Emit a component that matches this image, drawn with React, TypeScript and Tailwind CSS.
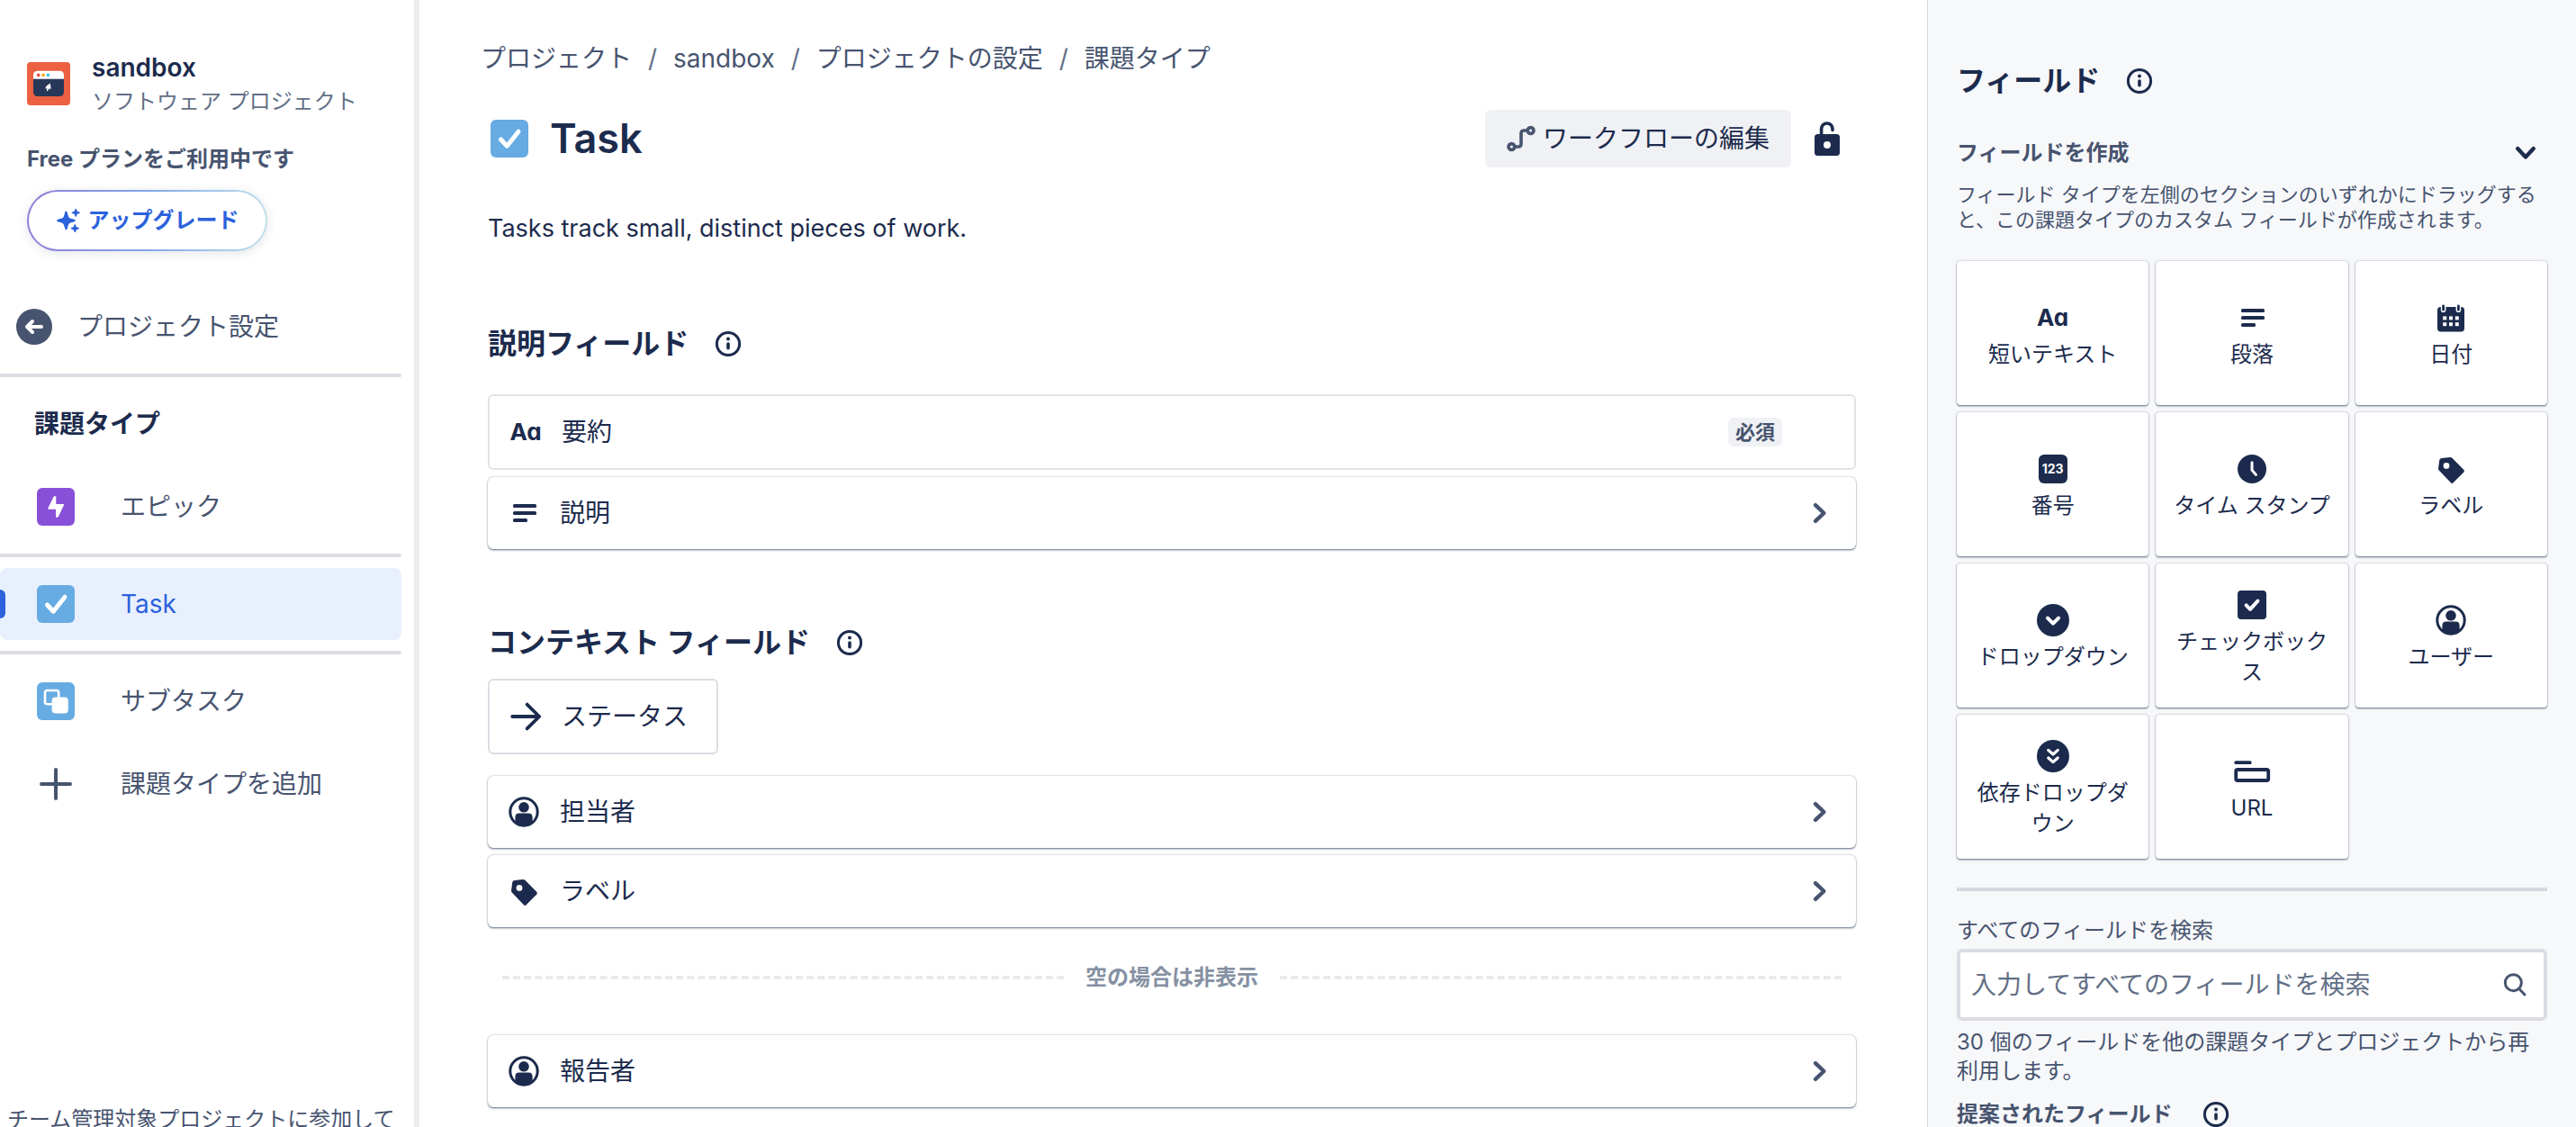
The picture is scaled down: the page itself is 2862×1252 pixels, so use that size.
import type { ReactNode } from "react";

type IconProps = { className?: string };

function Svg({ className = "size-12", children }: { className?: string; children: ReactNode }) {
  return (
    <svg viewBox="0 0 24 24" fill="none" aria-hidden="true" className={`${className} shrink-0`}>
      {children}
    </svg>
  );
}

const round = { strokeLinecap: "round", strokeLinejoin: "round" } as const;

function InfoIcon() {
  return (
    <Svg>
      <circle cx="12" cy="12" r="6.3" stroke="currentColor" strokeWidth="1.5" />
      <circle cx="12" cy="9.3" r="1" fill="currentColor" />
      <rect x="11.1" y="11.1" width="1.8" height="4.2" rx="0.9" fill="currentColor" />
    </Svg>
  );
}

function InfoButton({ label }: { label: string }) {
  return (
    <button type="button" aria-label={label} className="-my-2 flex text-[#1c2b4d]">
      <InfoIcon />
    </button>
  );
}

function TextIcon() {
  return (
    <span
      aria-hidden="true"
      className="flex size-12 shrink-0 items-center justify-center text-[26px] leading-8 font-bold [font-feature-settings:'cv11']"
    >
      Aa
    </span>
  );
}

function ParagraphIcon() {
  return (
    <Svg>
      <g fill="currentColor">
        <rect x="6" y="7" width="13" height="2" rx="0.8" />
        <rect x="6" y="11" width="13" height="2" rx="0.8" />
        <rect x="6" y="15" width="8" height="2" rx="0.8" />
      </g>
    </Svg>
  );
}

function CalendarIcon() {
  return (
    <Svg>
      <rect x="4.5" y="6" width="15" height="13.7" rx="1.8" fill="currentColor" />
      <g stroke="#fff" strokeWidth="2.8" {...round}>
        <path d="M7.8 5.4V7.6M16.2 5.4V7.6" />
      </g>
      <g stroke="currentColor" strokeWidth="1.4" {...round}>
        <path d="M7.8 5.4V7.6M16.2 5.4V7.6" />
      </g>
      <g fill="#fff">
        <rect x="7.6" y="11.2" width="2" height="2" />
        <rect x="11" y="11.2" width="2" height="2" />
        <rect x="14.4" y="11.2" width="2" height="2" />
        <rect x="7.6" y="14.6" width="2" height="2" />
        <rect x="11" y="14.6" width="2" height="2" />
        <rect x="14.4" y="14.6" width="2" height="2" />
      </g>
    </Svg>
  );
}

function NumberIcon() {
  return (
    <span className="flex size-12 items-center justify-center" aria-hidden="true">
      <span className="flex size-8 items-center justify-center rounded-md bg-[#1c2b4d] text-[14px] leading-none font-bold text-white">
        123
      </span>
    </span>
  );
}

function ClockIcon() {
  return (
    <Svg>
      <circle cx="12" cy="12" r="8" fill="currentColor" />
      <path d="M12 8.4V12.6L14.2 15.2" stroke="#fff" strokeWidth="1.5" {...round} />
    </Svg>
  );
}

function TagIcon() {
  return (
    <Svg>
      <path
        fillRule="evenodd"
        fill="currentColor"
        d="M6.9 6L11.4 5.5Q12.2 5.4 12.8 6L19.1 12.4Q19.7 13 19.2 13.7L13.2 19.8Q12.6 20.3 12.1 19.7L5.5 12.9Q5 12.4 5 11.7L5.6 7.2Q5.7 6.2 6.9 6ZM9.5 8.5A1.7 1.7 0 1 0 9.5 11.9A1.7 1.7 0 1 0 9.5 8.5Z"
      />
    </Svg>
  );
}

function DropdownIcon() {
  return (
    <Svg>
      <circle cx="12" cy="12" r="9" fill="currentColor" />
      <path d="M9 10.8L12 13.8L15 10.8" stroke="#fff" strokeWidth="2" {...round} />
    </Svg>
  );
}

function DependentDropdownIcon() {
  return (
    <Svg>
      <circle cx="12" cy="12" r="9" fill="currentColor" />
      <path d="M9.4 8.7L12 11L14.6 8.7M9.4 13L12 15.3L14.6 13" stroke="#fff" strokeWidth="1.6" {...round} />
    </Svg>
  );
}

function CheckboxIcon() {
  return (
    <Svg>
      <rect x="4" y="4" width="16" height="16" rx="2" fill="currentColor" />
      <path d="M8.8 12.2L11 14.4L15.2 9.8" stroke="#fff" strokeWidth="2" {...round} />
    </Svg>
  );
}

function PersonIcon() {
  return (
    <Svg>
      <circle cx="12" cy="12" r="7.6" stroke="currentColor" strokeWidth="1.5" />
      <circle cx="12" cy="9.4" r="2.9" fill="currentColor" />
      <path d="M7.2 15Q7.2 12.8 9.4 12.8H14.6Q16.8 12.8 16.8 15V17.5Q14.8 19.6 12 19.6T7.2 17.5Z" fill="currentColor" />
    </Svg>
  );
}

function UrlIcon() {
  return (
    <Svg>
      <rect x="2.2" y="6.1" width="9.6" height="1.9" rx="0.8" fill="currentColor" />
      <rect x="3.1" y="11" width="18" height="6" rx="0.9" stroke="currentColor" strokeWidth="1.9" />
    </Svg>
  );
}

function ArrowIcon() {
  return (
    <Svg>
      <path d="M4.6 12H19.4M12.8 5.3L19.6 12L12.8 18.7" stroke="currentColor" strokeWidth="1.9" {...round} />
    </Svg>
  );
}

function ChevronIcon({ className }: IconProps) {
  return (
    <Svg className={className}>
      <path d="M9.5 7.6L14.2 12L9.5 16.4" stroke="currentColor" strokeWidth="2.2" {...round} />
    </Svg>
  );
}

function TypeIcon({ color, children }: { color: string; children: ReactNode }) {
  return (
    <svg viewBox="0 0 42 42" fill="none" aria-hidden="true" className="size-[42px] shrink-0">
      <rect width="42" height="42" rx="6" fill={color} />
      {children}
    </svg>
  );
}

function TaskIcon() {
  return (
    <TypeIcon color="#67abe3">
      <path d="M11.5 22L18.3 29.2L31 13.2" stroke="#fff" strokeWidth="5" {...round} />
    </TypeIcon>
  );
}

function EpicIcon() {
  return (
    <TypeIcon color="#8850d8">
      <path
        d="M20.5 10V18.7H29.3L23 32H21.8V23H13L19.3 10Z"
        fill="#fff"
        stroke="#fff"
        strokeWidth="1.6"
        strokeLinejoin="round"
      />
    </TypeIcon>
  );
}

function SubtaskIcon() {
  return (
    <TypeIcon color="#67abe3">
      <rect x="9" y="9" width="15.2" height="15.2" rx="2.5" stroke="#fff" strokeWidth="2.6" />
      <rect x="16.6" y="16.4" width="18.2" height="18.2" rx="4" fill="#fff" />
    </TypeIcon>
  );
}

function ProjectLogo() {
  return (
    <svg viewBox="0 0 48 48" aria-hidden="true" className="size-12 shrink-0">
      <rect width="48" height="48" rx="4" fill="#ec6142" />
      <path d="M12 9.7H36Q41 9.7 41 14.7V19H7V14.7Q7 9.7 12 9.7Z" fill="#fff" />
      <path d="M7 18.7H41V33Q41 38 36 38H12Q7 38 7 33Z" fill="#283858" />
      <circle cx="12.7" cy="14.4" r="1.8" fill="#e5493a" />
      <circle cx="18" cy="14.4" r="1.8" fill="#f5a623" />
      <circle cx="23.4" cy="14.4" r="1.8" fill="#3bbfe0" />
      <path d="M25.8 23.6L26.6 29.2L25.4 30.4L25 28.8L22.6 32.4L21.8 31.6L22.6 29.4L20.2 29.2L21.6 26.6Z" fill="#fff" />
    </svg>
  );
}

function SparkleIcon() {
  return (
    <svg viewBox="0 0 28 28" fill="currentColor" aria-hidden="true" className="size-7 shrink-0">
      <path d="M11.5 3.6C12.3 3.6 12.7 4.4 13.4 7.4C14.2 10.5 15 11.3 18 12C21 12.8 21.8 13.1 21.8 14C21.8 14.9 21 15.2 18 16C15 16.7 14.2 17.5 13.4 20.6C12.7 23.6 12.3 24.4 11.5 24.4C10.7 24.4 10.2 23.6 9.5 20.6C8.7 17.5 7.9 16.7 4.9 16C1.9 15.2 1.1 14.9 1.1 14C1.1 13.1 1.9 12.8 4.9 12C7.9 11.3 8.7 10.5 9.5 7.4C10.2 4.4 10.7 3.6 11.5 3.6Z" />
      <g stroke="currentColor" strokeLinejoin="round">
        <path d="M22.2 1L23.5 4L26.6 5.3L23.5 6.6L22.2 9.6L20.9 6.6L17.8 5.3L20.9 4Z" />
        <path d="M21.3 18.4L22.6 21.4L25.7 22.7L22.6 24L21.3 27L20 24L16.9 22.7L20 21.4Z" />
      </g>
    </svg>
  );
}

function WorkflowIcon() {
  return (
    <svg viewBox="0 0 32 32" fill="none" stroke="currentColor" aria-hidden="true" className="size-8 shrink-0">
      <circle cx="5.4" cy="25" r="3.4" strokeWidth="3.6" />
      <circle cx="26.6" cy="7" r="3.4" strokeWidth="3.6" />
      <path d="M9 25H13Q16 25 16 22V10Q16 7 19 7H23" strokeWidth="3.6" />
    </svg>
  );
}

function UnlockIcon() {
  return (
    <svg viewBox="0 0 28 40" fill="none" aria-hidden="true" className="h-10 w-7 shrink-0">
      <path
        fillRule="evenodd"
        fill="currentColor"
        d="M3.5 15H24.5Q28 15 28 18.5V35.5Q28 39 24.5 39H3.5Q0 39 0 35.5V18.5Q0 15 3.5 15ZM14 23A4 4 0 1 0 14 31A4 4 0 1 0 14 23Z"
      />
      <path d="M7.6 17V9.2A6.2 6.2 0 0 1 20 9.2V10.4" stroke="currentColor" strokeWidth="3.6" strokeLinecap="round" />
    </svg>
  );
}

function SidebarRule() {
  return <hr className="mr-3.5 h-1 rounded-r-sm border-0 bg-[#dddee4]" />;
}

function SidebarItem({ icon, label, active = false }: { icon: ReactNode; label: string; active?: boolean }) {
  return (
    <a
      href="#"
      aria-current={active ? "page" : undefined}
      className={`relative my-3 mr-3.5 flex h-20 items-center gap-[51px] rounded-lg pl-[41px] text-[28px] leading-10 ${
        active ? "bg-[#e9f0fd] text-[#2c62dc]" : "text-[#47546f]"
      }`}
    >
      {active && <span className="absolute left-0 h-8 w-1.5 rounded-r-md bg-[#2c62dc]" />}
      {icon}
      {label}
    </a>
  );
}

function Sidebar() {
  return (
    <aside className="flex w-[466px] shrink-0 flex-col overflow-hidden border-r-6 border-[#ededf0] text-[#47546f]">
      <div className="flex items-center gap-6 pt-[55px] pl-[30px]">
        <ProjectLogo />
        <div>
          <p className="text-[28px] leading-10 font-semibold text-[#1c2b4d]">sandbox</p>
          <p className="text-[24px] leading-9 text-[#626f86]">ソフトウェア プロジェクト</p>
        </div>
      </div>
      <p className="mt-[30px] pl-[30px] text-[24px] leading-8 font-bold">Free プランをご利用中です</p>
      <button
        type="button"
        className="mt-[18px] ml-[30px] flex h-[68px] w-[267px] rounded-full bg-linear-to-r from-[#8f7ed8] via-[#82a8e8] to-[#bfdfe9] p-0.5 shadow-[0_2px_12px_rgba(9,30,66,0.12)]"
      >
        <span className="flex h-full w-full items-center justify-center gap-2 rounded-full bg-white text-[24px] leading-8 font-bold text-[#2c62dc]">
          <SparkleIcon />
          アップグレード
        </span>
      </button>
      <a href="#" className="mt-11 mb-3 flex h-20 items-center gap-7 pl-[18px] text-[28px] leading-10">
        <svg viewBox="0 0 40 40" fill="none" aria-hidden="true" className="size-10 shrink-0">
          <circle cx="20" cy="20" r="20" fill="currentColor" />
          <path d="M28 20H12M18 14L12 20L18 26" stroke="#fff" strokeWidth="4" {...round} />
        </svg>
        プロジェクト設定
      </a>
      <SidebarRule />
      <h2 className="mt-8 mb-5 pl-[38px] text-[28px] leading-10 font-bold text-[#1c2b4d]">課題タイプ</h2>
      <nav className="flex flex-col">
        <SidebarItem icon={<EpicIcon />} label="エピック" />
        <SidebarRule />
        <SidebarItem icon={<TaskIcon />} label="Task" active />
        <SidebarRule />
        <SidebarItem icon={<SubtaskIcon />} label="サブタスク" />
        <button
          type="button"
          className="mr-3.5 flex h-20 items-center gap-[51px] pl-[41px] text-[28px] leading-10"
        >
          <svg viewBox="0 0 42 42" aria-hidden="true" className="size-[42px] shrink-0">
            <path d="M21 5V37M5 21H37" stroke="currentColor" strokeWidth="4" {...round} />
          </svg>
          課題タイプを追加
        </button>
      </nav>
      <p className="mt-auto h-6 overflow-hidden pl-2 text-[24px] leading-8 whitespace-nowrap">
        チーム管理対象プロジェクトに参加して
      </p>
    </aside>
  );
}

const cardShadow = "shadow-[0_1px_1px_rgba(9,30,66,0.3),0_2px_2px_rgba(9,30,66,0.2),0_0_2px_rgba(9,30,66,0.45)]";

function FieldCard({ icon, label }: { icon: ReactNode; label: string }) {
  return (
    <button
      type="button"
      className={`flex h-20 w-full items-center rounded-md bg-white pr-4 pl-4 text-left text-[28px] leading-10 ${cardShadow}`}
    >
      {icon}
      <span className="flex-1 pl-4">{label}</span>
      <ChevronIcon className="size-12 text-[#47546f]" />
    </button>
  );
}

function SectionHeading({ title }: { title: string }) {
  return (
    <div className="flex h-12 items-center gap-5">
      <h2 className="text-[32px] leading-[48px] font-bold">{title}</h2>
      <InfoButton label={`${title}について`} />
    </div>
  );
}

function Dashes() {
  return <span aria-hidden="true" className="flex-1 border-t-4 border-dashed border-[#e9eaee]" />;
}

const crumbs = ["プロジェクト", "sandbox", "プロジェクトの設定", "課題タイプ"];

function Main() {
  return (
    <main className="min-w-0 flex-1 overflow-hidden pt-[45px] pr-[79px] pl-[76px]">
      <nav aria-label="パンくずリスト" className="-ml-2">
        <ol className="flex text-[28px] leading-10 text-[#47546f]">
          {crumbs.map((crumb, i) => (
            <li key={crumb} className="flex">
              {i > 0 && <span className="w-[46px] text-center text-[#626f86]">/</span>}
              <a href="#">{crumb}</a>
            </li>
          ))}
        </ol>
      </nav>

      <div className="mt-[37px] flex h-16 items-center">
        <span className="pl-[3px]">
          <TaskIcon />
        </span>
        <h1 className="flex-1 pl-6 text-[45px] leading-[56px] font-semibold">Task</h1>
        <button
          type="button"
          className="flex h-16 items-center gap-2 rounded-md bg-[#f0f1f4] px-6 text-[28px] leading-10"
        >
          <span className="text-[#47546f]">
            <WorkflowIcon />
          </span>
          ワークフローの編集
        </button>
        <button type="button" aria-label="ロック解除" className="mr-[18px] ml-[26px] flex">
          <UnlockIcon />
        </button>
      </div>

      <p className="mt-12 text-[27px] leading-10">Tasks track small, distinct pieces of work.</p>

      <section className="mt-21">
        <SectionHeading title="説明フィールド" />
        <div className="mt-8 flex flex-col gap-2">
          <div className="flex h-21 items-center rounded-md border-2 border-[#e2e3e8] pr-20 pl-4 text-[28px] leading-10">
            <TextIcon />
            <span className="flex-1 pl-4">要約</span>
            <span className="rounded-md bg-[#f0f1f4] px-2 text-[22px] leading-8 font-bold text-[#47546f]">必須</span>
          </div>
          <FieldCard icon={<ParagraphIcon />} label="説明" />
        </div>
      </section>

      <section className="mt-20">
        <SectionHeading title="コンテキスト フィールド" />
        <div className="mt-4 flex">
          <div className="flex h-21 items-center rounded-md border-2 border-[#dddee4] pr-8 pl-4 text-[28px] leading-10">
            <ArrowIcon />
            <span className="pl-4">ステータス</span>
          </div>
        </div>
        <div className="mt-6 flex flex-col gap-2">
          <FieldCard icon={<PersonIcon />} label="担当者" />
          <FieldCard icon={<TagIcon />} label="ラベル" />
        </div>
        <div className="mt-10 flex items-center gap-6 px-4">
          <Dashes />
          <span className="text-[24px] leading-8 font-bold text-[#8590a2]">空の場合は非表示</span>
          <Dashes />
        </div>
        <div className="mt-12 pb-6">
          <FieldCard icon={<PersonIcon />} label="報告者" />
        </div>
      </section>
    </main>
  );
}

const fieldTypes: { label: string; icon: ReactNode }[] = [
  { label: "短いテキスト", icon: <TextIcon /> },
  { label: "段落", icon: <ParagraphIcon /> },
  { label: "日付", icon: <CalendarIcon /> },
  { label: "番号", icon: <NumberIcon /> },
  { label: "タイム スタンプ", icon: <ClockIcon /> },
  { label: "ラベル", icon: <TagIcon /> },
  { label: "ドロップダウン", icon: <DropdownIcon /> },
  { label: "チェックボックス", icon: <CheckboxIcon /> },
  { label: "ユーザー", icon: <PersonIcon /> },
  { label: "依存ドロップダウン", icon: <DependentDropdownIcon /> },
  { label: "URL", icon: <UrlIcon /> },
];

function FieldPanel() {
  return (
    <aside className="w-[721px] shrink-0 overflow-hidden border-l border-[#d3d8e0] bg-[#f7f8fa] px-8 pt-[66px] text-[#47546f]">
      <div className="flex h-12 items-center gap-5 text-[#1c2b4d]">
        <h2 className="text-[32px] leading-[48px] font-bold">フィールド</h2>
        <InfoButton label="フィールドについて" />
      </div>

      <div className="mt-10 flex h-8 items-center justify-between">
        <h3 className="text-[24px] leading-8 font-bold">フィールドを作成</h3>
        <button type="button" aria-label="折りたたむ" className="flex text-[#1c2b4d]">
          <ChevronIcon className="size-12 rotate-90" />
        </button>
      </div>
      <p className="mt-4 text-[22px] leading-7">
        フィールド タイプを左側のセクションのいずれかにドラッグすると、この課題タイプのカスタム フィールドが作成されます。
      </p>

      <div className="mt-8 grid grid-cols-3 gap-2 text-[#1c2b4d]">
        {fieldTypes.map(({ label, icon }) => (
          <button
            key={label}
            type="button"
            className={`flex h-40 flex-col items-center justify-center rounded-sm bg-white px-4 ${cardShadow}`}
          >
            {icon}
            <span className="text-center text-[24px] leading-[34px]">{label}</span>
          </button>
        ))}
      </div>

      <hr className="mt-8 h-1 border-0 bg-[#d6d7df]" />

      <label htmlFor="field-search" className="mt-7 block text-[24px] leading-8">
        すべてのフィールドを検索
      </label>
      <div className="mt-1 flex h-20 items-center rounded-md border-4 border-[#dcdde4] bg-white pr-3 pl-3">
        <input
          id="field-search"
          type="text"
          placeholder="入力してすべてのフィールドを検索"
          className="min-w-0 flex-1 bg-transparent text-[28px] leading-10 outline-none placeholder:text-[#626f86]"
        />
        <Svg className="size-10">
          <circle cx="11" cy="10.6" r="5.4" stroke="currentColor" strokeWidth="1.8" />
          <path d="M15 14.8L18.6 18.6" stroke="currentColor" strokeWidth="1.8" {...round} />
        </Svg>
      </div>
      <p className="mt-2 text-[24px] leading-8">
        30 個のフィールドを他の課題タイプとプロジェクトから再利用します。
      </p>
      <div className="mt-4 flex h-8 items-center gap-6">
        <h3 className="text-[24px] leading-8 font-bold">提案されたフィールド</h3>
        <InfoButton label="提案されたフィールドについて" />
      </div>
    </aside>
  );
}

export default function App() {
  return (
    <div
      lang="ja"
      className="flex h-screen overflow-hidden bg-white font-[Inter,'Noto_Sans_CJK_JP',sans-serif] text-[#1c2b4d]"
    >
      <Sidebar />
      <Main />
      <FieldPanel />
    </div>
  );
}
